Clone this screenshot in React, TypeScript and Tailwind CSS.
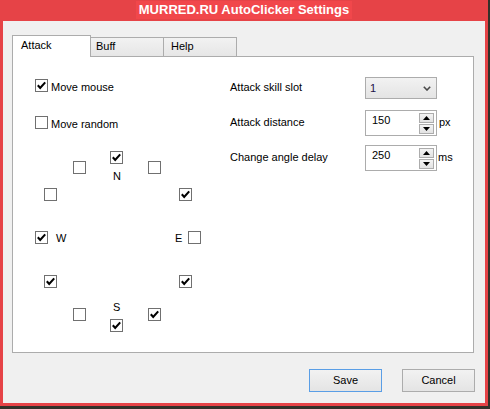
import React from "react";

function Box({ checked }: { checked?: boolean }) {
  return (
    <svg width="13" height="13" viewBox="0 0 13 13" className="block shrink-0">
      <rect x="0.5" y="0.5" width="12" height="12" fill="#fff" stroke="#707070" />
      {checked && (
        <path d="M2.8 6.3L5.2 8.9L10.2 3.4" fill="none" stroke="#000" strokeWidth="2.1" strokeLinejoin="miter" />
      )}
    </svg>
  );
}

function Spin() {
  return (
    <div className="ml-auto mr-[2px] mt-[2px] flex flex-col">
      <div className="flex h-[10px] w-[15px] items-center justify-center border border-[#acacac] bg-linear-to-b from-[#f4f4f4] to-[#e2e2e2]">
        <svg width="7" height="4" viewBox="0 0 7 4"><path d="M0 4L3.5 0L7 4Z" fill="#000" /></svg>
      </div>
      <div className="mt-px flex h-[10px] w-[15px] items-center justify-center border border-[#acacac] bg-linear-to-b from-[#f4f4f4] to-[#e2e2e2]">
        <svg width="7" height="4" viewBox="0 0 7 4"><path d="M0 0L3.5 4L7 0Z" fill="#000" /></svg>
      </div>
    </div>
  );
}

function Num({ value }: { value: string }) {
  return (
    <div className="flex h-[26px] w-[72px] items-start border border-[#acacac] bg-white">
      <span className="pl-[6px] pt-[3px] leading-[13px] text-black">{value}</span>
      <Spin />
    </div>
  );
}

export default function App() {
  return (
    <div
      className="h-[409px] w-[490px] overflow-hidden bg-[#33312a] text-[11px] leading-[13px] text-black"
      style={{ fontFamily: '"Liberation Sans", Arial, sans-serif' }}
    >
      <div className="flex h-[406px] w-[488px] flex-col bg-[#e64347]">
        <div className="flex h-[21px] justify-center pt-[1px]">
          <span className="h-[18px] bg-[#f1474b] px-[3px] text-[13px] font-bold leading-[18px] text-white">
            MURRED.RU AutoClicker Settings
          </span>
        </div>
        <div className="mx-[3px] mb-[3px] flex flex-1 flex-col bg-[#f0f0f0] pl-[9px] pr-[11px] pt-[14px]">
          {/* tabs */}
          <div className="flex h-[22px] items-end">
            <div className="relative z-10 h-[22px] w-[79px] border-l border-r border-t border-[#acacac] bg-white pl-[8px] pt-[3px]">
              Attack
            </div>
            <div className="-ml-px h-[20px] w-[74px] border border-[#acacac] bg-linear-to-b from-[#f2f2f2] to-[#e6e6e6] pl-[5px] pt-[2px]">
              Buff
            </div>
            <div className="-ml-px h-[20px] w-[74px] border border-[#acacac] bg-linear-to-b from-[#f2f2f2] to-[#e6e6e6] pl-[7px] pt-[2px]">
              Help
            </div>
          </div>
          {/* panel */}
          <div className="-mt-px flex h-[297px] w-[462px] border border-[#acacac] bg-white">
            {/* left column */}
            <div className="flex w-[217px] flex-col pl-[22px] pt-[22px]">
              <div className="flex items-start">
                <Box checked />
                <span className="ml-[3px] mt-[2px]">Move mouse</span>
              </div>
              <div className="mt-[22px] flex items-start">
                <Box />
                <span className="ml-[3px] mt-[2px]">Move random</span>
              </div>
              <div className="relative mt-[20px] h-[181px] w-[166px]">
                <div className="absolute left-[75px] top-[0px]"><Box checked /></div>
                <span className="absolute left-[78px] top-[19px]">N</span>
                <div className="absolute left-[38px] top-[10px]"><Box /></div>
                <div className="absolute left-[113px] top-[10px]"><Box /></div>
                <div className="absolute left-[9px] top-[37px]"><Box /></div>
                <div className="absolute left-[144px] top-[37px]"><Box checked /></div>
                <div className="absolute left-[0px] top-[80px]"><Box checked /></div>
                <span className="absolute left-[21px] top-[81px]">W</span>
                <span className="absolute left-[140px] top-[81px]">E</span>
                <div className="absolute left-[153px] top-[80px]"><Box /></div>
                <div className="absolute left-[9px] top-[124px]"><Box checked /></div>
                <div className="absolute left-[144px] top-[124px]"><Box checked /></div>
                <span className="absolute left-[78px] top-[150px]">S</span>
                <div className="absolute left-[38px] top-[157px]"><Box /></div>
                <div className="absolute left-[113px] top-[157px]"><Box checked /></div>
                <div className="absolute left-[75px] top-[168px]"><Box checked /></div>
              </div>
            </div>
            {/* right column */}
            <div className="flex flex-col pt-[20px]">
              <div className="flex h-[22px] items-center">
                <span className="mb-[2px] w-[135px]">Attack skill slot</span>
                <div className="flex h-[22px] w-[72px] items-center border border-[#acacac] bg-linear-to-b from-[#f2f2f2] to-[#e4e4e4] pl-[4px] pr-[5px]">
                  <span className="text-[#1c1048]">1</span>
                  <svg className="ml-auto" width="8" height="5" viewBox="0 0 8 5">
                    <path d="M0.8 0.8L4 4L7.2 0.8" fill="none" stroke="#4a4a4a" strokeWidth="1.6" />
                  </svg>
                </div>
              </div>
              <div className="mt-[11px] flex h-[26px] items-center">
                <span className="mb-[2px] w-[135px]">Attack distance</span>
                <Num value="150" />
                <span className="mb-[2px] ml-[2px]">px</span>
              </div>
              <div className="mt-[9px] flex h-[26px] items-center">
                <span className="mb-[2px] w-[135px]">Change angle delay</span>
                <Num value="250" />
                <span className="mb-[2px] ml-[1px]">ms</span>
              </div>
            </div>
          </div>
          {/* buttons */}
          <div className="-mr-px mt-[16px] flex justify-end gap-[20px]">
            <button className="flex h-[23px] w-[73px] items-center justify-center border border-[#5a9ee6] bg-linear-to-b from-[#f2f2f2] to-[#e4e4e4]">
              Save
            </button>
            <button className="flex h-[23px] w-[73px] items-center justify-center border border-[#acacac] bg-linear-to-b from-[#f2f2f2] to-[#e4e4e4]">
              Cancel
            </button>
          </div>
        </div>
      </div>
    </div>
  );
}
